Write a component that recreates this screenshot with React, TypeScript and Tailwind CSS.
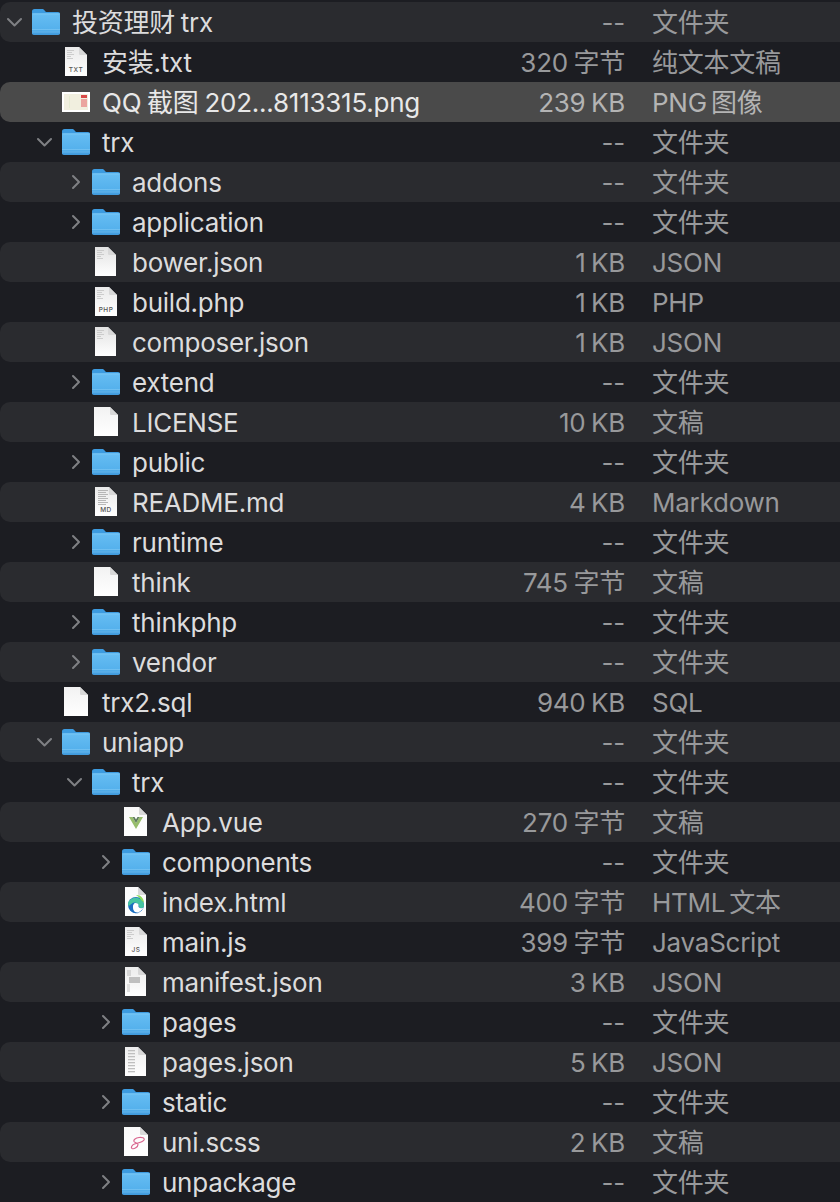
import React from 'react';

type IconKind = 'folder' | 'txt' | 'png' | 'doc' | 'php' | 'blank' | 'md' | 'sql' | 'vue' | 'edge' | 'js' | 'manifest' | 'pages' | 'scss';

interface Row {
  name: string;
  size: string;
  kind: string;
  depth: number;
  icon: IconKind;
  open?: boolean;
}

const rows: Row[] = [
  { name: '投资理财 trx', size: '--', kind: '文件夹', depth: 0, icon: 'folder', open: true },
  { name: '安装.txt', size: '320 字节', kind: '纯文本文稿', depth: 1, icon: 'txt' },
  { name: 'QQ 截图 202...8113315.png', size: '239 KB', kind: 'PNG 图像', depth: 1, icon: 'png' },
  { name: 'trx', size: '--', kind: '文件夹', depth: 1, icon: 'folder', open: true },
  { name: 'addons', size: '--', kind: '文件夹', depth: 2, icon: 'folder' },
  { name: 'application', size: '--', kind: '文件夹', depth: 2, icon: 'folder' },
  { name: 'bower.json', size: '1 KB', kind: 'JSON', depth: 2, icon: 'doc' },
  { name: 'build.php', size: '1 KB', kind: 'PHP', depth: 2, icon: 'php' },
  { name: 'composer.json', size: '1 KB', kind: 'JSON', depth: 2, icon: 'doc' },
  { name: 'extend', size: '--', kind: '文件夹', depth: 2, icon: 'folder' },
  { name: 'LICENSE', size: '10 KB', kind: '文稿', depth: 2, icon: 'blank' },
  { name: 'public', size: '--', kind: '文件夹', depth: 2, icon: 'folder' },
  { name: 'README.md', size: '4 KB', kind: 'Markdown', depth: 2, icon: 'md' },
  { name: 'runtime', size: '--', kind: '文件夹', depth: 2, icon: 'folder' },
  { name: 'think', size: '745 字节', kind: '文稿', depth: 2, icon: 'blank' },
  { name: 'thinkphp', size: '--', kind: '文件夹', depth: 2, icon: 'folder' },
  { name: 'vendor', size: '--', kind: '文件夹', depth: 2, icon: 'folder' },
  { name: 'trx2.sql', size: '940 KB', kind: 'SQL', depth: 1, icon: 'sql' },
  { name: 'uniapp', size: '--', kind: '文件夹', depth: 1, icon: 'folder', open: true },
  { name: 'trx', size: '--', kind: '文件夹', depth: 2, icon: 'folder', open: true },
  { name: 'App.vue', size: '270 字节', kind: '文稿', depth: 3, icon: 'vue' },
  { name: 'components', size: '--', kind: '文件夹', depth: 3, icon: 'folder' },
  { name: 'index.html', size: '400 字节', kind: 'HTML 文本', depth: 3, icon: 'edge' },
  { name: 'main.js', size: '399 字节', kind: 'JavaScript', depth: 3, icon: 'js' },
  { name: 'manifest.json', size: '3 KB', kind: 'JSON', depth: 3, icon: 'manifest' },
  { name: 'pages', size: '--', kind: '文件夹', depth: 3, icon: 'folder' },
  { name: 'pages.json', size: '5 KB', kind: 'JSON', depth: 3, icon: 'pages' },
  { name: 'static', size: '--', kind: '文件夹', depth: 3, icon: 'folder' },
  { name: 'uni.scss', size: '2 KB', kind: '文稿', depth: 3, icon: 'scss' },
  { name: 'unpackage', size: '--', kind: '文件夹', depth: 3, icon: 'folder' },
];

const depthPad = ['pl-0', 'pl-[30px]', 'pl-[60px]', 'pl-[90px]'];

const FolderIcon = () => (
  <svg width="30" height="28" viewBox="0 0 30 28">
    <defs>
      <linearGradient id="folderFront" x1="0" y1="0" x2="0" y2="1">
        <stop offset="0" stopColor="#66bdf3" />
        <stop offset="0.72" stopColor="#55b1ec" />
        <stop offset="1" stopColor="#3f99dc" />
      </linearGradient>
    </defs>
    <path d="M0 3.500C0 2 .8 1 2.500 1h7.500c1.500 0 2 .6 2.800 1.700.6.900 1.200 1.300 2.200 1.300H26c1.400 0 2 .8 2 2v6H0z" fill="#3c9be0" />
    <rect x="0" y="5.500" width="28" height="21.500" rx="1.800" fill="url(#folderFront)" />
    <rect x="0" y="5.500" width="28" height="0.800" fill="#86cdf7" />
    <rect x="0" y="21" width="28" height="1" fill="#7cc6f4" opacity="0.7" />
    <rect x="0" y="23.500" width="28" height="1" fill="#7cc6f4" opacity="0.5" />
  </svg>
);

// generic page with a dog-ear, x/w come from the icon since macOS sizes vary per type
const Page = ({ children, x = 3, w = 21, top = '#e9e9e9', bottom = '#ffffff', fold = '#d8d8d8' }: {
  children?: React.ReactNode;
  x?: number;
  w?: number;
  top?: string;
  bottom?: string;
  fold?: string;
}) => {
  const right = x + w;
  return (
    <svg width="30" height="30" viewBox="0 0 30 30">
      <defs>
        <linearGradient id={`page${top.slice(1)}`} x1="0" y1="0" x2="0" y2="1">
          <stop offset="0" stopColor={top} />
          <stop offset="1" stopColor={bottom} />
        </linearGradient>
      </defs>
      <path d={`M${x} 0h${w - 8}l8 8v21h-${w}z`} fill={`url(#page${top.slice(1)})`} />
      <path d={`M${right - 8} 0l8 8h-6.500c-1 0-1.500-.5-1.500-1.500z`} fill={fold} />
      {children}
    </svg>
  );
};

const SmallLines = ({ x = 5 }: { x?: number }) => (
  <g fill="#c4c4c4">
    <rect x={x} y="3" width="7" height="0.8" />
    <rect x={x} y="5" width="5" height="0.8" />
    <rect x={x} y="7" width="7" height="0.8" />
    <rect x={x} y="9" width="4" height="0.8" />
    <rect x={x} y="11" width="6" height="0.8" />
  </g>
);

const PageLabel = ({ text, cx = 14 }: { text: string; cx?: number }) => (
  <text x={cx} y="25" textAnchor="middle" fontSize="6.500" fontWeight="500" letterSpacing="0.5" fill="#555555" fontFamily="Inter, sans-serif">
    {text}
  </text>
);

const FileIcon = ({ icon }: { icon: IconKind }) => {
  switch (icon) {
    case 'folder':
      return <FolderIcon />;
    case 'txt':
    case 'php':
    case 'js':
      return (
        <Page w={22}>
          <SmallLines />
          <PageLabel text={icon.toUpperCase()} />
        </Page>
      );
    case 'md':
      return (
        <Page w={22}>
          <g fill="#b0b0b0">
            {[3, 5, 7, 9, 11, 13, 15, 17].map((y, n) => (
              <rect key={y} x="6" y={y} width={n % 2 ? 8 : 10} height="0.9" />
            ))}
          </g>
          <PageLabel text="MD" />
        </Page>
      );
    case 'doc':
      return (
        <Page top="#e2e2e2">
          <SmallLines />
        </Page>
      );
    case 'blank':
    case 'sql':
      return <Page x={2} w={24} top="#f2f2f2" />;
    case 'png':
      return (
        <svg width="30" height="30" viewBox="0 0 30 30">
          <rect x="0" y="5" width="28" height="20" fill="#ffffff" />
          <rect x="2" y="7" width="24" height="16" fill="#f1efdf" />
          <rect x="7" y="9" width="1" height="12" fill="#e6ebd2" />
          <rect x="19" y="8" width="6" height="3" fill="#d84a48" />
          <rect x="19" y="12" width="6" height="8" fill="#eba5a0" />
        </svg>
      );
    case 'vue':
      return (
        <Page x={2} w={23} top="#f8f8f8">
          <path d="M7 10h3.500l3.500 6 3.500-6H21l-7 12z" fill="#97bd6c" />
          <path d="M10.500 10h2l1.500 2.500 1.500-2.500h2L14 16z" fill="#5d7a5c" />
        </Page>
      );
    case 'edge':
      return (
        <Page top="#fbfbfb">
          <circle cx="14" cy="18" r="8" fill="#1c6fc0" />
          <path d="M6 17c1-8 14-9 16 1 .3 2-1 3.500-3.500 3-2-.4-1-3-3-4.500C12 14 9 16 8.500 20 7 19.500 6 18.500 6 17z" fill="#46c5a0" />
          <path d="M14 8c4-.5 8 3 8 8l-3-3c-1-2-3-4-5-5z" fill="#8edb5a" />
          <path d="M13.500 16c2 0 3.500 1.200 3 3-.5 2.200 3 2.800 5 1.500-1.500 3-4.500 5.500-8 5-2.500-.5-3.500-3-3-5.500.2-2 1.500-4 3-4z" fill="#ffffff" />
          <path d="M11 20.500c0 3 2 5.500 5.500 5.500-4 1-9-1-9.500-7 1-1.500 3-2.500 5-3-1 1-1 3-1 4.500z" fill="#1c6fc0" />
        </Page>
      );
    case 'manifest':
      return (
        <Page top="#ececec">
          <rect x="5" y="3" width="4" height="6" fill="#d6d6d6" />
          <rect x="7" y="10" width="11" height="6" fill="#c0c0c0" />
          <rect x="5" y="17" width="3" height="8" fill="#e0e0e0" />
        </Page>
      );
    case 'pages':
      return (
        <Page top="#ededed">
          <g fill="#bfbfbf">
            {[3, 6, 9, 12, 15, 18, 21, 24].map((y) => (
              <rect key={y} x="6" y={y} width="7" height="1.300" />
            ))}
          </g>
        </Page>
      );
    case 'scss':
      return (
        <Page x={2} w={24} top="#fafafa">
          <path d="M22 13c1-2-2-3-5-2.500-3 .5-6 2-5 4 .8 1.500 4 1 4 3 0 2.500-4 5-6 4-1.500-1 0-3.500 2.500-4.500 3-1 8-1.500 9.500-4z" fill="none" stroke="#d9668f" strokeWidth="1.200" />
        </Page>
      );
  }
};

const Chevron = ({ open }: { open?: boolean }) => (
  <svg width="18" height="18" viewBox="0 0 18 18" fill="none" stroke="#7f8084" strokeWidth="2" strokeLinecap="round" strokeLinejoin="round">
    {open ? <path d="M1 6l6.500 6.500L14 6" /> : <path d="M6 3l6 6-6 6" />}
  </svg>
);

const App = () => {
  return (
    <div className="h-[1202px] w-[840px] overflow-hidden bg-[#1c1d22] pt-[2px] font-['Inter','Noto_Sans_CJK_SC',sans-serif] text-[26px] tracking-[-0.25px]">
      {rows.map((row, i) => {
        const selected = i === 2;
        const striped = i % 2 === 0;
        const bg = selected ? 'bg-[#4a4a4a]' : striped ? 'bg-[#2a2b2f]' : 'bg-transparent';
        return (
          <div key={i} className={`flex h-10 items-center rounded-l-[10px] ${bg} ${depthPad[row.depth]}`}>
            <div className="flex w-[32px] shrink-0 items-center justify-center">
              {row.icon === 'folder' && <Chevron open={row.open} />}
            </div>
            <div className="flex w-[30px] shrink-0 items-center justify-center">
              <FileIcon icon={row.icon} />
            </div>
            <div className={`ml-[10px] min-w-0 flex-1 whitespace-nowrap [word-spacing:-1.2px] ${selected ? 'text-[#e8e8e8]' : 'text-[#dcdcdd]'}`}>
              {row.name}
            </div>
            <div className={`w-[160px] shrink-0 whitespace-nowrap text-right [word-spacing:-1.5px] ${selected ? 'text-[#b4b4b4]' : 'text-[#98999b]'}`}>
              {row.size}
            </div>
            <div className={`ml-[27px] w-[188px] shrink-0 whitespace-nowrap [word-spacing:-3px] ${selected ? 'text-[#b4b4b4]' : 'text-[#98999b]'}`}>
              {row.kind}
            </div>
          </div>
        );
      })}
    </div>
  );
};

export default App;
